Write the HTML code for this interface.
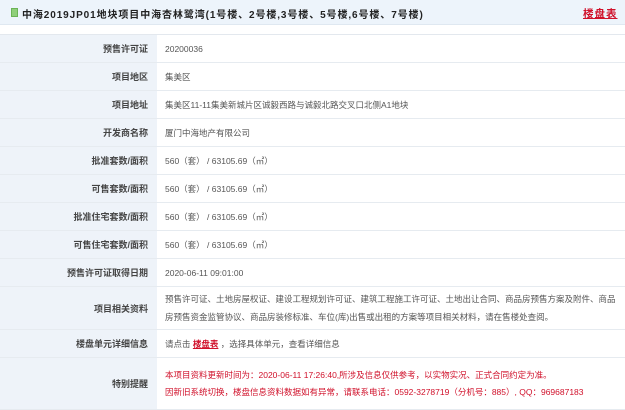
<!DOCTYPE html>
<html><head><meta charset="utf-8"><style>
*{margin:0;padding:0;box-sizing:border-box}
body{width:625px;height:405px;overflow:hidden;background:#fff;font-family:"Liberation Sans","Noto Sans CJK SC",sans-serif;}
.hd{position:absolute;left:0;top:0;width:625px;height:25px;background:#edf4fb;border-bottom:1px solid #dfe8f1;}
.hd .ic{position:absolute;left:11px;top:8px;width:7px;height:9px;background:#8fcf7a;border:1px solid #6bb356}
.hd .t{position:absolute;left:22px;top:6px;font-size:10px;font-weight:bold;color:#222;letter-spacing:0.9px;white-space:nowrap}
.hd a{position:absolute;left:583px;top:6px;font-size:10.5px;font-weight:bold;color:#d0102a;text-decoration:underline;letter-spacing:1px}
table{position:absolute;left:0;top:34px;width:625px;border-collapse:collapse;border-top:1px solid #e3e8ee;table-layout:fixed}
td{border-bottom:1px solid #e6ebf0;font-size:8.5px;color:#555;height:28px;vertical-align:middle}
td.l{width:157px;background:#eef3f9;text-align:right;padding-right:9px;font-weight:bold;color:#444;font-size:9px}
td.v{padding-left:8px;padding-right:8px;line-height:18px}
.r{color:#d0102a}
.lk{color:#d0102a;font-weight:bold;text-decoration:underline}
</style></head><body>
<div class="hd"><div class="ic"></div><div class="t">中海2019JP01地块项目中海杏林鹭湾(1号楼、2号楼,3号楼、5号楼,6号楼、7号楼)</div><a>楼盘表</a></div>
<table>
<tr><td class="l" style="height:27px">预售许可证</td><td class="v">20200036</td></tr>
<tr><td class="l">项目地区</td><td class="v">集美区</td></tr>
<tr><td class="l">项目地址</td><td class="v">集美区11-11集美新城片区诚毅西路与诚毅北路交叉口北侧A1地块</td></tr>
<tr><td class="l">开发商名称</td><td class="v">厦门中海地产有限公司</td></tr>
<tr><td class="l">批准套数/面积</td><td class="v">560（套） / 63105.69（㎡）</td></tr>
<tr><td class="l">可售套数/面积</td><td class="v">560（套） / 63105.69（㎡）</td></tr>
<tr><td class="l">批准住宅套数/面积</td><td class="v">560（套） / 63105.69（㎡）</td></tr>
<tr><td class="l">可售住宅套数/面积</td><td class="v">560（套） / 63105.69（㎡）</td></tr>
<tr><td class="l" style="height:27px">预售许可证取得日期</td><td class="v">2020-06-11 09:01:00</td></tr>
<tr><td class="l" style="height:43px">项目相关资料</td><td class="v">预售许可证、土地房屋权证、建设工程规划许可证、建筑工程施工许可证、土地出让合同、商品房预售方案及附件、商品房预售资金监管协议、商品房装修标准、车位(库)出售或出租的方案等项目相关材料，请在售楼处查阅。</td></tr>
<tr><td class="l" style="height:28px">楼盘单元详细信息</td><td class="v">请点击 <span class="lk">楼盘表</span> ，选择具体单元，查看详细信息</td></tr>
<tr><td class="l" style="height:52px">特别提醒</td><td class="v r" style="line-height:17px">本项目资料更新时间为：2020-06-11 17:26:40,所涉及信息仅供参考，以实物实况、正式合同约定为准。<br>因新旧系统切换，楼盘信息资料数据如有异常，请联系电话：0592-3278719（分机号：885）, QQ：969687183</td></tr>
</table>
</body></html>
